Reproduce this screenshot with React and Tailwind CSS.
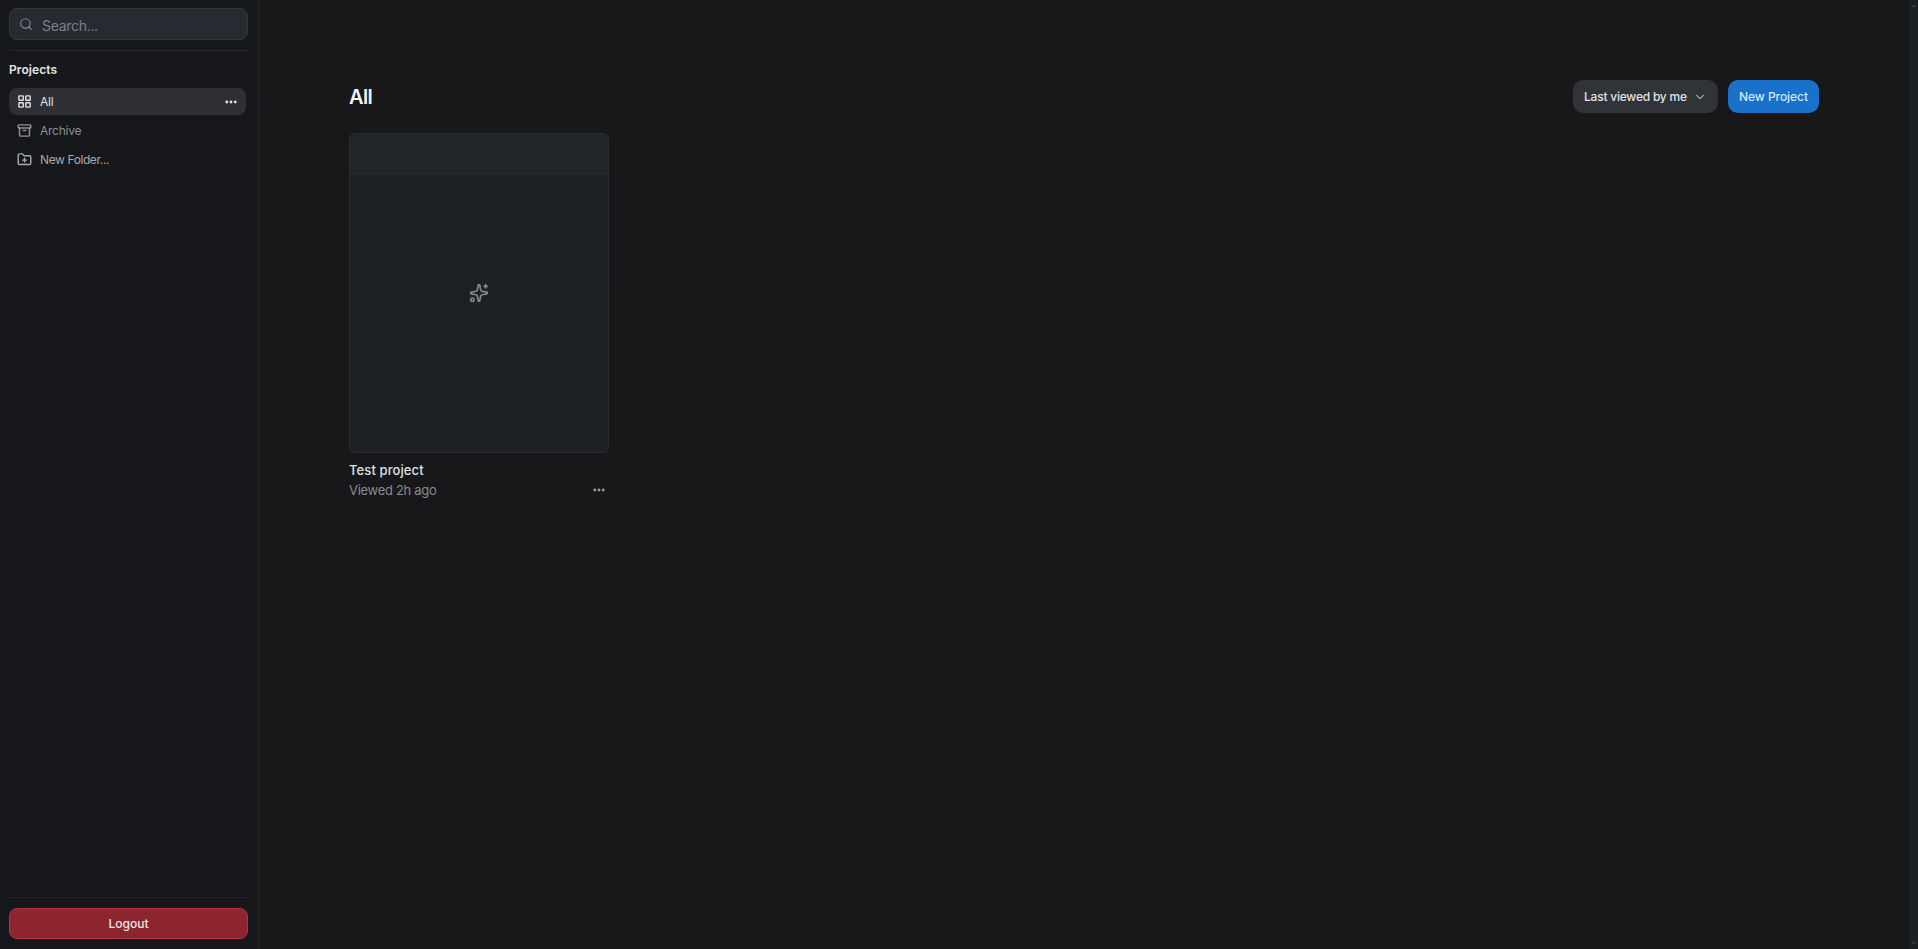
import { Archive, ChevronDown, ChevronUp, FolderPlus, LayoutGrid, Search, Sparkles } from "lucide-react";

function Dots({ className }) {
  return (
    <svg viewBox="0 0 14 4" className={className} fill="currentColor">
      <circle cx="2.8" cy="2" r="1.45" />
      <circle cx="7" cy="2" r="1.45" />
      <circle cx="11.2" cy="2" r="1.45" />
    </svg>
  );
}

function NavItem({ icon: Icon, label, active, className }) {
  return (
    <div
      className={`flex h-[27px] w-[237px] items-center rounded-lg pl-2 pr-2 text-[12px] ${
        active ? "bg-[#2e3036] text-[#dfe1e5]" : ""
      } ${className}`}
    >
      <Icon size={15} strokeWidth={2.3} className="mr-2" />
      <span className="flex-1">{label}</span>
      {active && <Dots className="h-1 w-3.5 text-[#dfe1e5]" />}
    </div>
  );
}

function Sidebar() {
  return (
    <aside className="flex w-[259px] shrink-0 flex-col border-r border-[#242629] bg-[#15171a] px-[9px] pt-2 pb-[10px]">
      <div className="flex h-8 w-[239px] items-center rounded-lg border border-[#33373e] bg-[#272a30] pl-[9px]">
        <Search size={14} className="text-[#85888d]" />
        <span className="mt-0.5 ml-[9px] text-[14px] tracking-[-0.3px] text-[#7b7f85]">Search...</span>
      </div>
      <div className="mt-[10px] h-px w-[239px] bg-[#26282b]" />
      <h2 className="mt-[10px] text-[12px] leading-[18px] font-semibold tracking-[0.1px] text-[#e4e6e9]">Projects</h2>
      <nav className="mt-[9px] flex flex-col gap-0.5">
        <NavItem icon={LayoutGrid} label="All" active className="tracking-[-0.2px]" />
        <NavItem icon={Archive} label="Archive" className="text-[#8e9197] tracking-[-0.25px]" />
        <NavItem icon={FolderPlus} label="New Folder..." className="text-[#a6a9ae] tracking-[-0.4px]" />
      </nav>
      <div className="mt-auto h-px w-[239px] bg-[#222427]" />
      <button className="mt-[10px] h-[31px] w-[239px] rounded-lg border border-[#b92f3a] bg-[#8c252e] text-[12px] font-medium text-[#f1e6e7]">
        Logout
      </button>
    </aside>
  );
}

function ProjectCard({ name, viewed }) {
  return (
    <div className="w-[260px]">
      <div className="flex h-80 items-center justify-center rounded-md border border-[#292d30] bg-linear-to-b from-[#212527] from-13% via-[#1d2025] via-13% to-[#1d2123] to-75%">
        <Sparkles size={20} strokeWidth={2} className="text-[#85888c]" />
      </div>
      <div className="mt-[7px] text-[13px] leading-5 font-medium tracking-[0.1px] text-[#dfe1e4]">{name}</div>
      <div className="mt-px flex h-5 items-center justify-between pr-[3px] text-[13px] tracking-[-0.3px] text-[#868b94]">
        <span>{viewed}</span>
        <Dots className="mb-0.5 h-1 w-3.5 text-[#96999e]" />
      </div>
    </div>
  );
}

export default function App() {
  return (
    <div className="flex h-[949px] w-[1918px] overflow-hidden bg-[#18181a] font-['Inter',sans-serif]">
      <Sidebar />
      <main className="flex-1 px-[90px] pt-20">
        <header className="flex h-[33px] items-center">
          <h1 className="mt-px flex-1 text-[20px] font-semibold tracking-[-0.6px] text-[#f3f3f4]">All</h1>
          <button className="flex h-[33px] w-[145px] items-center rounded-[10px] bg-[#303337] pl-[11px] text-[12px] font-medium whitespace-nowrap text-[#e1e3e6]">
            <span className="w-[109px] text-left tracking-[-0.22px]">Last viewed by me</span>
            <ChevronDown size={14} className="text-[#9a9da2]" />
          </button>
          <button className="ml-[10px] h-[33px] w-[91px] rounded-[10px] bg-[#1971c9] text-[12px] font-medium tracking-[-0.05px] whitespace-nowrap text-[#d8e8f8]">
            New Project
          </button>
        </header>
        <section className="mt-5">
          <ProjectCard name="Test project" viewed="Viewed 2h ago" />
        </section>
      </main>
      <div className="flex w-[9px] shrink-0 flex-col items-center justify-between bg-[#1a1f23] py-[3px] text-[#3b4044]">
        <ChevronUp size={6} strokeWidth={5} />
        <ChevronDown size={6} strokeWidth={5} />
      </div>
    </div>
  );
}
